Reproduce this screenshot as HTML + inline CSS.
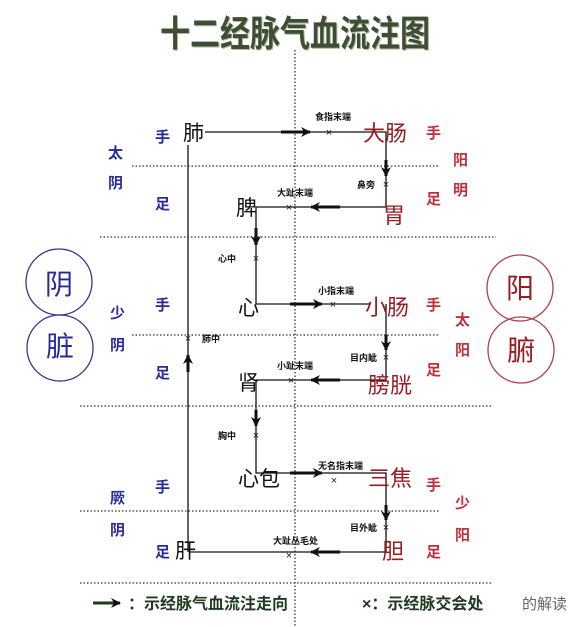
<!DOCTYPE html>
<html><head><meta charset="utf-8"><style>
html,body{margin:0;padding:0;background:#fff;}
svg{display:block;}
text{font-family:"Liberation Sans","Noto Sans CJK SC",sans-serif;}
.k{font-size:21px;fill:#111;}
.r{font-size:22px;fill:#9a1c22;}
.b{font-size:15px;fill:#2a2a9a;font-weight:bold;}
.rr{font-size:15px;fill:#c0303a;font-weight:bold;}
.s{font-size:9px;fill:#111;font-weight:bold;}
.x{font-size:11px;fill:#222;}
</style></head><body>
<svg width="574" height="627" viewBox="0 0 574 627" xmlns="http://www.w3.org/2000/svg">
<defs><marker id="a" viewBox="0 0 10 10" refX="9" refY="5" markerWidth="10" markerHeight="10" markerUnits="userSpaceOnUse" orient="auto"><path d="M0,0 L10,5 L0,10 L3,5 z" fill="#111"/></marker></defs>
<text x="161" y="47" textLength="270" lengthAdjust="spacingAndGlyphs" style="font-size:36px;font-weight:bold;fill:#b0b8a0">十二经脉气血流注图</text>
<text x="160" y="46" textLength="270" lengthAdjust="spacingAndGlyphs" style="font-size:36px;font-weight:bold;fill:#3e4e34">十二经脉气血流注图</text>
<g stroke="#333" stroke-width="1.3" stroke-dasharray="1.5,2" fill="none">
<line x1="295" y1="50" x2="295" y2="627"/>
<line x1="132" y1="166" x2="440" y2="166"/>
<line x1="100" y1="237" x2="496" y2="237"/>
<line x1="132" y1="335" x2="440" y2="335"/>
<line x1="80" y1="406" x2="492" y2="406"/>
<line x1="80" y1="511" x2="440" y2="511"/>
<line x1="80" y1="583" x2="492" y2="583"/>
</g>
<g stroke="#111" stroke-width="1.3" fill="none">
<polyline points="205,132 386,132 386,207 258,207 256,207 256,304 370,304"/>
<polyline points="386,304 386,380 256,380 256,473 282,473 386,473 386,552 190,552"/>
<line x1="188" y1="552" x2="188" y2="145"/>
</g>
<g stroke="#111" stroke-width="3" fill="none">
<line x1="281" y1="132" x2="310" y2="132" marker-end="url(#a)"/>
<line x1="340" y1="207" x2="311" y2="207" marker-end="url(#a)"/>
<line x1="290" y1="304" x2="322" y2="304" marker-end="url(#a)"/>
<line x1="340" y1="380" x2="311" y2="380" marker-end="url(#a)"/>
<line x1="290" y1="473" x2="322" y2="473" marker-end="url(#a)"/>
<line x1="340" y1="552" x2="311" y2="552" marker-end="url(#a)"/>
<line x1="386" y1="160" x2="386" y2="176" marker-end="url(#a)"/>
<line x1="256" y1="228" x2="256" y2="245" marker-end="url(#a)"/>
<line x1="386" y1="335" x2="386" y2="350" marker-end="url(#a)"/>
<line x1="256" y1="410" x2="256" y2="426" marker-end="url(#a)"/>
<line x1="386" y1="505" x2="386" y2="520" marker-end="url(#a)"/>
<line x1="188" y1="372" x2="188" y2="355" marker-end="url(#a)"/>
</g>
<g class="x" text-anchor="middle">
<text x="329" y="136">×</text><text x="386" y="188">×</text><text x="289" y="211">×</text>
<text x="256" y="262">×</text><text x="333" y="308">×</text><text x="188" y="342">×</text>
<text x="386" y="361">×</text><text x="291" y="384">×</text><text x="256" y="439">×</text>
<text x="334" y="484">×</text><text x="386" y="531">×</text><text x="289" y="559">×</text>
</g>
<g class="s">
<text x="315" y="120">食指末端</text><text x="357" y="188">鼻旁</text><text x="277" y="196">大趾末端</text>
<text x="218" y="262">心中</text><text x="318" y="294">小指末端</text><text x="202" y="342">肺中</text>
<text x="350" y="361">目内眦</text><text x="277" y="369">小趾末端</text><text x="218" y="439">胸中</text>
<text x="318" y="469">无名指末端</text><text x="350" y="531">目外眦</text><text x="273" y="544">大趾丛毛处</text>
</g>
<g class="k">
<text x="183" y="140">肺</text><text x="236" y="215">脾</text><text x="238" y="315">心</text>
<text x="238" y="390">肾</text><text x="238" y="486">心包</text><text x="175" y="558">肝</text>
</g>
<g class="r">
<text x="363" y="141">大肠</text><text x="383" y="223">胃</text><text x="365" y="315">小肠</text>
<text x="368" y="393">膀胱</text><text x="368" y="486">三焦</text><text x="382" y="559">胆</text>
</g>
<g class="b">
<text x="155" y="142">手</text><text x="155" y="209">足</text><text x="155" y="310">手</text><text x="155" y="378">足</text><text x="155" y="492">手</text><text x="155" y="557">足</text>
<text x="108" y="158">太</text><text x="108" y="188">阴</text><text x="110" y="318">少</text><text x="110" y="350">阴</text><text x="110" y="503">厥</text><text x="110" y="535">阴</text>
</g>
<g class="rr">
<text x="426" y="138">手</text><text x="426" y="204">足</text><text x="426" y="310">手</text><text x="426" y="375">足</text><text x="426" y="490">手</text><text x="426" y="557">足</text>
<text x="453" y="165">阳</text><text x="453" y="195">明</text><text x="455" y="325">太</text><text x="455" y="355">阳</text><text x="455" y="508">少</text><text x="455" y="540">阳</text>
</g>
<g fill="none" stroke-width="1.3">
<circle cx="59" cy="282" r="33" stroke="#333a8a"/>
<circle cx="60" cy="348" r="33" stroke="#333a8a"/>
<circle cx="520" cy="288" r="33" stroke="#b04048"/>
<circle cx="521" cy="350" r="33" stroke="#b04048"/>
</g>
<text x="59" y="294" text-anchor="middle" style="font-size:28px;fill:#2a2a9a">阴</text>
<text x="60" y="356" text-anchor="middle" style="font-size:28px;fill:#2a2a9a">脏</text>
<text x="520" y="298" text-anchor="middle" style="font-size:28px;fill:#9a1c22">阳</text>
<text x="521" y="360" text-anchor="middle" style="font-size:28px;fill:#9a1c22">腑</text>
<line x1="93" y1="603" x2="120" y2="603" stroke="#1f3a1f" stroke-width="3" marker-end="url(#a)"/>
<text x="128" y="609" style="font-size:16px;font-weight:bold;fill:#1f3a1f">：示经脉气血流注走向</text>
<text x="362" y="609" style="font-size:16px;font-weight:bold;fill:#1f3a1f">×：示经脉交会处</text>
<text x="522" y="609" style="font-size:15px;fill:#666">的解读</text>
</svg>
</body></html>
